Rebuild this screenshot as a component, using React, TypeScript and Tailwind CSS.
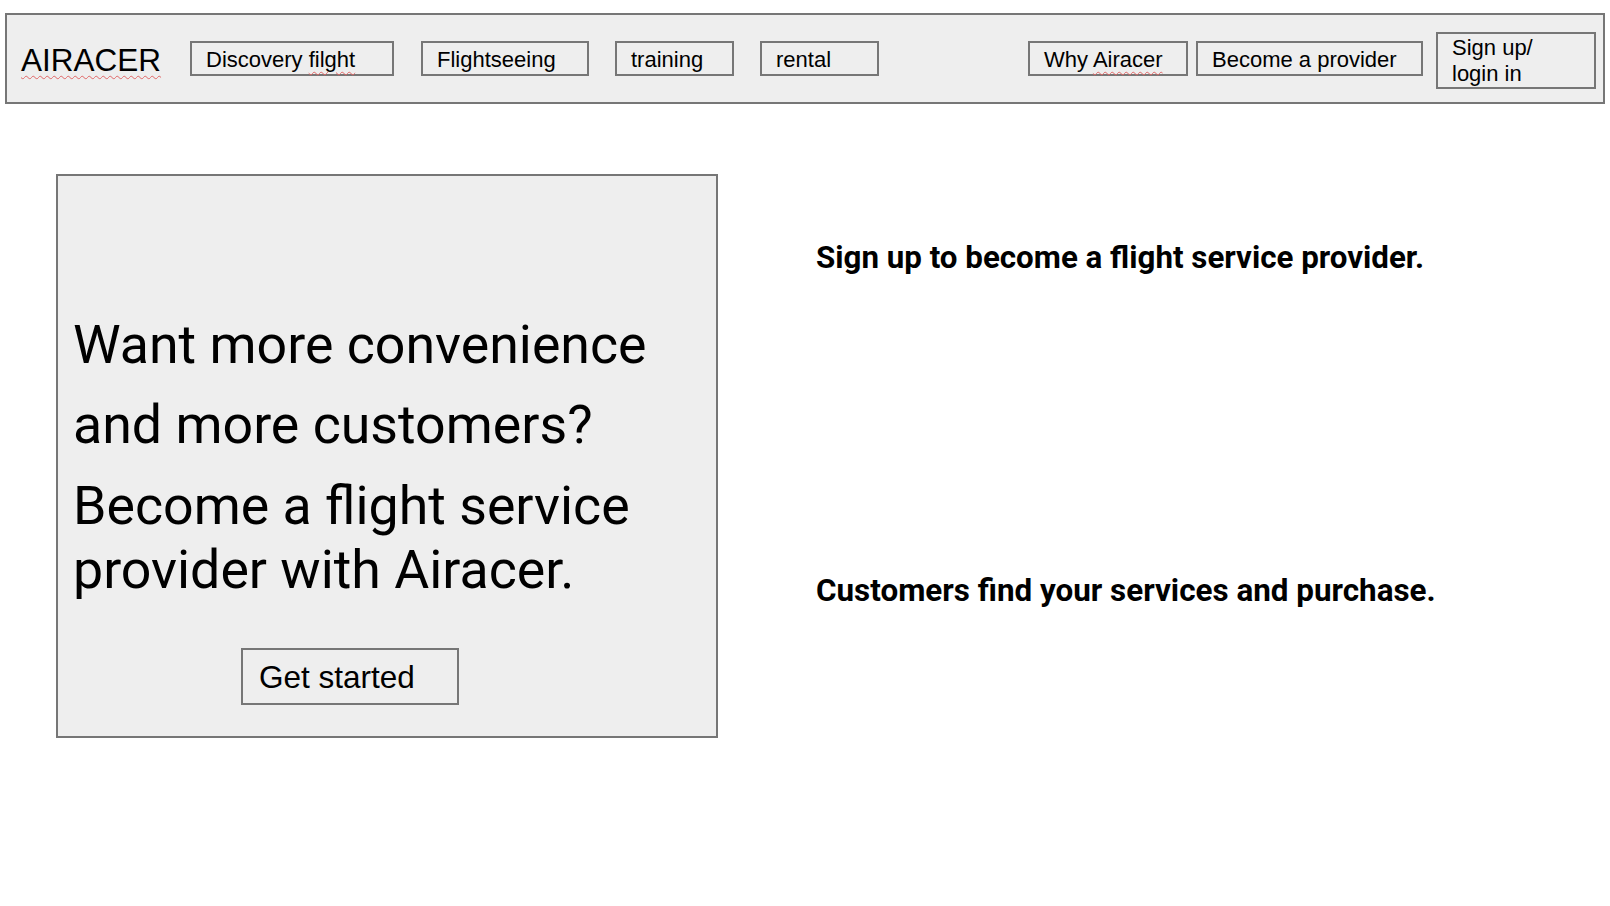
import React from "react";

const arial = { fontFamily: '"Liberation Sans", Arial, sans-serif' };

function NavBox({ w, children, className = "" }: { w: string; children: React.ReactNode; className?: string }) {
  return (
    <div
      className={`h-[35px] border-2 border-[#767676] flex items-center pl-[14px] pt-[2px] text-[22px] text-black whitespace-nowrap ${w} ${className}`}
    >
      {children}
    </div>
  );
}

const squiggle = "underline decoration-wavy decoration-[#e06666] decoration-1 underline-offset-[4px]";

export default function App() {
  return (
    <div className="w-[1610px] h-[906px] bg-white overflow-hidden">
      <header
        className="ml-[5px] mt-[13px] w-[1600px] h-[91px] border-2 border-[#767676] bg-[#eeeeee] flex items-center pl-[14px]"
        style={arial}
      >
        <div className="w-[169px] text-[31.5px] leading-none mt-[4px] text-black">
          <span className={squiggle}>AIRACER</span>
        </div>
        <NavBox w="w-[204px]">
          <span>
            Discovery <span className={squiggle}>filght</span>
          </span>
        </NavBox>
        <NavBox w="w-[168px]" className="ml-[27px]">Flightseeing</NavBox>
        <NavBox w="w-[119px]" className="ml-[26px]">training</NavBox>
        <NavBox w="w-[119px]" className="ml-[26px]">rental</NavBox>
        <NavBox w="w-[160px]" className="ml-[149px]">
          <span>
            Why <span className={squiggle}>Airacer</span>
          </span>
        </NavBox>
        <NavBox w="w-[227px]" className="ml-[8px]">Become a provider</NavBox>
        <div className="ml-[13px] mt-[3px] w-[160px] h-[57px] border-2 border-[#767676] pl-[14px] pt-[1px] text-[22px] leading-[26px] text-black">
          Sign up/
          <br />
          login in
        </div>
      </header>

      <main className="flex mt-[70px]">
        <section
          className="ml-[56px] w-[662px] h-[564px] border-2 border-[#767676] bg-[#eeeeee] pl-[15px] pt-[129px]"
          style={{ fontFamily: 'Roboto, "Noto Sans", sans-serif' }}
        >
          <div className="text-[53.7px] leading-[80px] text-black whitespace-nowrap">
            <div>Want more convenience</div>
            <div>and more customers?</div>
          </div>
          <div className="mt-[9px] text-[53.7px] leading-[64px] text-black whitespace-nowrap">
            <div>Become a flight service</div>
            <div>provider with Airacer.</div>
          </div>
          <div className="mt-[46px] ml-[168px] w-[218px] h-[57px] border-2 border-[#767676] flex items-center pl-[16px] pt-[2px]">
            <span className="text-[31.5px] text-black" style={arial}>
              Get started
            </span>
          </div>
        </section>

        <section
          className="ml-[98px] pt-[66px] flex flex-col"
          style={{ fontFamily: 'Roboto, "Noto Sans", sans-serif' }}
        >
          <p className="text-[31.3px] leading-[36px] font-bold text-black whitespace-nowrap">
            Sign up to become a flight service provider.
          </p>
          <p className="mt-[297px] text-[31.4px] leading-[36px] font-bold text-black whitespace-nowrap">
            Customers find your services and purchase.
          </p>
        </section>
      </main>
    </div>
  );
}
